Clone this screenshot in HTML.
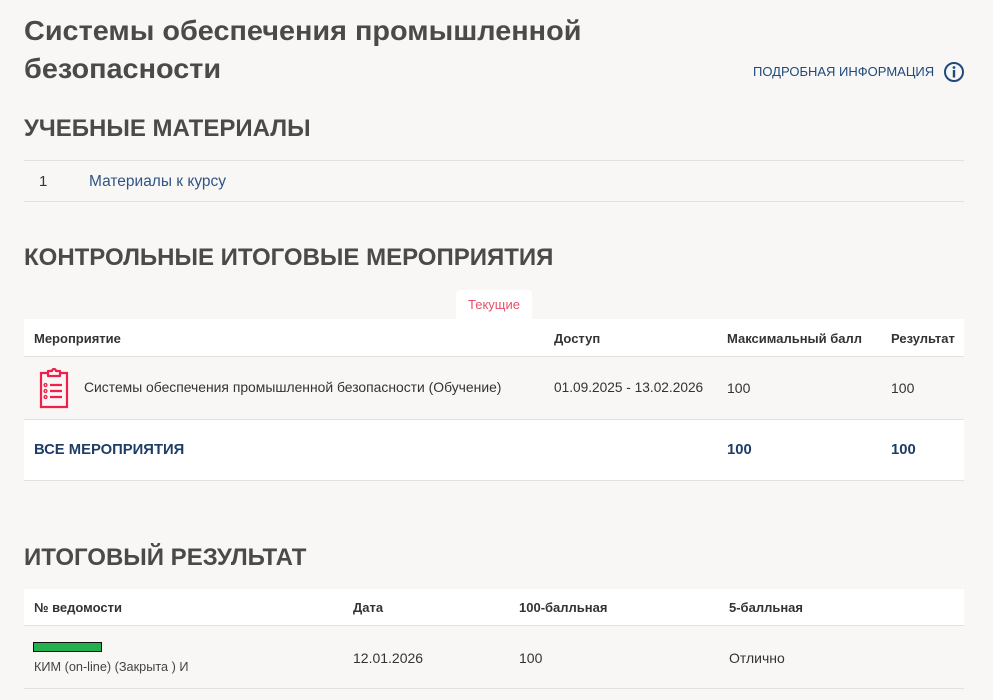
<!DOCTYPE html>
<html><head><meta charset="utf-8"><style>
*{margin:0;padding:0;box-sizing:border-box}
body{width:993px;height:700px;background:#f8f7f5;font-family:"Liberation Sans",sans-serif;color:#333;position:relative;overflow:hidden}
.a{position:absolute;white-space:nowrap}
.h{font-weight:bold;color:#4a4a4a;transform-origin:0 0}
.line{position:absolute;left:24px;width:940px;height:1px;background:#e2e1df}
.w{position:absolute;left:24px;width:940px;background:#fff}
.th{font-size:13px;font-weight:bold;color:#333}
.td{font-size:14px;color:#333}
</style></head><body>
<div class="a h" style="left:24px;top:12px;font-size:28px;line-height:38px;transform:scaleX(1.03)">Системы обеспечения промышленной<br>безопасности</div>
<div class="a" style="left:753px;top:64px;font-size:13px;color:#1f4a7c">ПОДРОБНАЯ ИНФОРМАЦИЯ</div>
<svg class="a" style="left:943px;top:61px" width="22" height="22" viewBox="0 0 22 22"><circle cx="11" cy="11" r="9" fill="none" stroke="#1f4a7c" stroke-width="2"/><circle cx="11" cy="6.5" r="1.4" fill="#1f4a7c"/><rect x="9.8" y="9" width="2.4" height="7.5" fill="#1f4a7c"/></svg>

<div class="a h" style="left:24px;top:115px;font-size:24px">УЧЕБНЫЕ МАТЕРИАЛЫ</div>
<div class="line" style="top:160px"></div>
<div class="a td" style="left:39px;top:173px;font-size:15px">1</div>
<div class="a td" style="left:89px;top:173px;color:#2e5585;font-size:15.5px">Материалы к курсу</div>
<div class="line" style="top:201px"></div>

<div class="a h" style="left:24px;top:244px;font-size:24px">КОНТРОЛЬНЫЕ ИТОГОВЫЕ МЕРОПРИЯТИЯ</div>
<div class="a" style="left:456px;top:290px;width:76px;height:30px;background:#fff;border-radius:4px 4px 0 0;font-size:13px;color:#e8506a;text-align:center;line-height:29px">Текущие</div>
<div class="w" style="top:319px;height:37px"></div>
<div class="a th" style="left:34px;top:331px">Мероприятие</div>
<div class="a th" style="left:554px;top:331px">Доступ</div>
<div class="a th" style="left:727px;top:331px">Максимальный балл</div>
<div class="a th" style="left:891px;top:331px">Результат</div>
<div class="line" style="top:356px"></div>
<svg class="a" style="left:38px;top:368px" width="32" height="41" viewBox="0 0 32 41" fill="none" stroke="#f0204a" stroke-width="2.2"><path d="M10 5H3v34h26V5h-7"/><path d="M10 3h4a2 2 0 0 1 4 0h4v5H10z" stroke-linejoin="round"/><circle cx="7.5" cy="17" r="1.4" stroke-width="1.4"/><circle cx="7.5" cy="23" r="1.4" stroke-width="1.4"/><circle cx="7.5" cy="29" r="1.4" stroke-width="1.4"/><path d="M12 17h12M12 23h12M12 29h12"/></svg>
<div class="a td" style="left:84px;top:379px;font-size:13.9px">Системы обеспечения промышленной безопасности (Обучение)</div>
<div class="a td" style="left:554px;top:380px;font-size:13.7px">01.09.2025 - 13.02.2026</div>
<div class="a td" style="left:727px;top:380px">100</div>
<div class="a td" style="left:891px;top:380px">100</div>
<div class="line" style="top:419px"></div>
<div class="w" style="top:420px;height:60px"></div>
<div class="a" style="left:34px;top:442px;font-size:14.8px;font-weight:bold;color:#1d3d66">ВСЕ МЕРОПРИЯТИЯ</div>
<div class="a" style="left:727px;top:442px;font-size:14.8px;font-weight:bold;color:#1d3d66">100</div>
<div class="a" style="left:891px;top:442px;font-size:14.8px;font-weight:bold;color:#1d3d66">100</div>
<div class="line" style="top:480px"></div>

<div class="a h" style="left:24px;top:544px;font-size:24px">ИТОГОВЫЙ РЕЗУЛЬТАТ</div>
<div class="w" style="top:589px;height:36px"></div>
<div class="a th" style="left:34px;top:600px">№ ведомости</div>
<div class="a th" style="left:353px;top:600px">Дата</div>
<div class="a th" style="left:519px;top:600px">100-балльная</div>
<div class="a th" style="left:729px;top:600px">5-балльная</div>
<div class="line" style="top:625px"></div>
<div class="a" style="left:33px;top:642px;width:69px;height:10px;background:#22b14c;border:1px solid #111"></div>
<div class="a" style="left:34px;top:660px;font-size:12.7px;color:#444">КИМ (on-line) (Закрыта ) И</div>
<div class="a td" style="left:353px;top:650px">12.01.2026</div>
<div class="a td" style="left:519px;top:650px">100</div>
<div class="a td" style="left:729px;top:650px">Отлично</div>
<div class="line" style="top:688px"></div>
</body></html>
